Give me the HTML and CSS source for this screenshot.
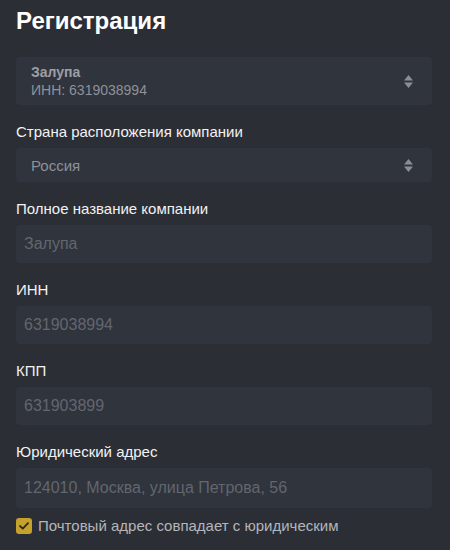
FILE: index.html
```html
<!DOCTYPE html>
<html lang="ru">
<head>
<meta charset="utf-8">
<link rel="stylesheet" href="styles.css">
</head>
<body>
<div class="page">
  <h1 class="title">Регистрация</h1>
  <div class="select company">
    <div class="company-text">
      <div class="company-name">Залупа</div>
      <div class="company-inn">ИНН: 6319038994</div>
    </div>
    <svg class="arrows" width="9" height="13" viewBox="0 0 9 13"><path d="M4.5 0 L9 5.5 H0 Z M0 7.5 H9 L4.5 13 Z" fill="#8a8e98"/></svg>
  </div>

  <div class="group">
    <div class="label">Страна расположения компании</div>
    <div class="select country">
      <span class="select-value">Россия</span>
      <svg class="arrows" width="9" height="13" viewBox="0 0 9 13"><path d="M4.5 0 L9 5.5 H0 Z M0 7.5 H9 L4.5 13 Z" fill="#8a8e98"/></svg>
    </div>
  </div>

  <div class="group">
    <div class="label">Полное название компании</div>
    <div class="input">Залупа</div>
  </div>

  <div class="group">
    <div class="label">ИНН</div>
    <div class="input">6319038994</div>
  </div>

  <div class="group">
    <div class="label">КПП</div>
    <div class="input">631903899</div>
  </div>

  <div class="group">
    <div class="label">Юридический адрес</div>
    <div class="input tall">124010, Москва, улица Петрова, 56</div>
  </div>

  <label class="check">
    <span class="box"><svg width="10" height="8" viewBox="0 0 10 8"><path d="M1 4 L3.8 6.6 L9 1.2" fill="none" stroke="#2a2a22" stroke-width="1.8" stroke-linecap="round" stroke-linejoin="round"/></svg></span>
    <span class="check-text">Почтовый адрес совпадает с юридическим</span>
  </label>
</div>
</body>
</html>
```

FILE: styles.css
```css
html, body {
  margin: 0;
  padding: 0;
  background: #2b2e35;
  font-family: "Liberation Sans", Arial, sans-serif;
}
.page {
  padding: 6px 18px 0 16px;
  display: flex;
  flex-direction: column;
}
.title {
  margin: 0;
  font-size: 24px;
  line-height: 30px;
  font-weight: bold;
  color: #ffffff;
}
.select, .input {
  background: #30343d;
  border-radius: 4px;
  display: flex;
  align-items: center;
}
.company {
  margin-top: 21px;
  height: 48px;
  padding: 0 15px;
  justify-content: space-between;
}
.company-name {
  font-size: 14px;
  font-weight: bold;
  color: #9c9fa5;
  line-height: 17px;
}
.company-inn {
  font-size: 14px;
  color: #8e9198;
  line-height: 18px;
}
.arrows {
  margin-right: 4px;
}
.group {
  margin-top: 17px;
  display: flex;
  flex-direction: column;
  gap: 7px;
}
.label {
  font-size: 15px;
  line-height: 19px;
  color: #f2f2f2;
}
.country {
  height: 34px;
  padding: 0 15px;
  justify-content: space-between;
}
.select-value {
  font-size: 15px;
  color: #8e9198;
}
.input {
  height: 38px;
  padding: 0 8px;
  font-size: 16px;
  color: #62666e;
}
.input.tall {
  height: 40px;
}
.check {
  margin-top: 9px;
  display: flex;
  align-items: center;
  gap: 6px;
}
.box {
  width: 16px;
  height: 16px;
  border-radius: 3px;
  background: #c4a22c;
  display: flex;
  align-items: center;
  justify-content: center;
}
.check-text {
  font-size: 15px;
  color: #b4b6ba;
}
```
